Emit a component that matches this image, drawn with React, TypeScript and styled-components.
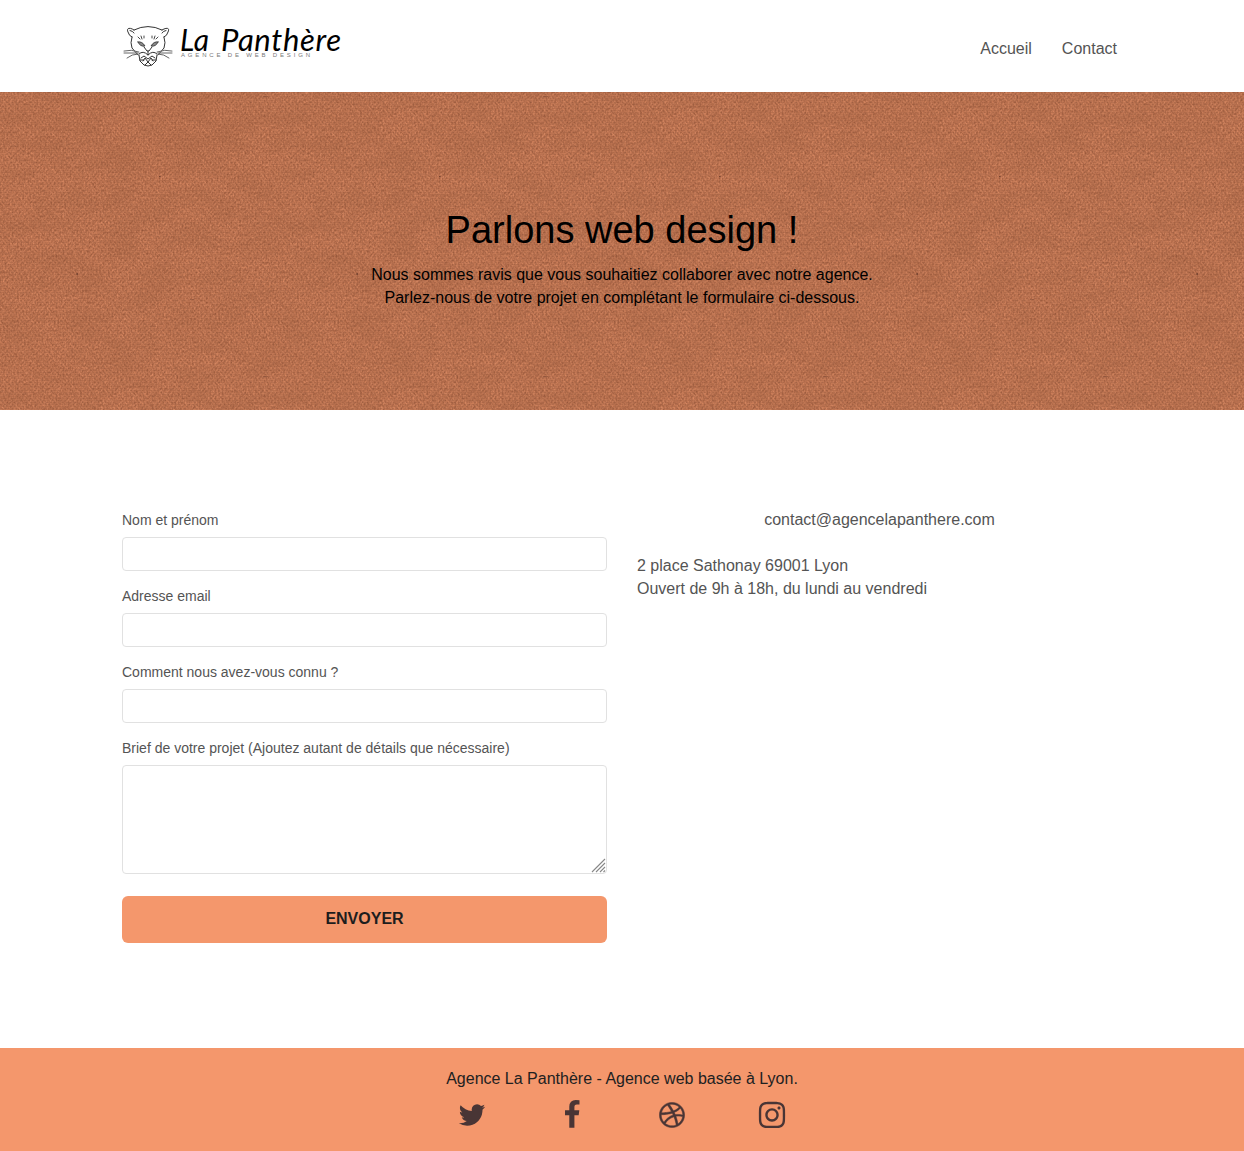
import React from "react";
import styled, { createGlobalStyle } from "styled-components";
import { FaDribbble, FaInstagram } from "react-icons/fa";

const svgUrl = (svg: string) =>
  `url("data:image/svg+xml,${encodeURIComponent(svg).replace(/'/g, "%27").replace(/\(/g, "%28").replace(/\)/g, "%29")}")`;

const grain = svgUrl(`<svg xmlns='http://www.w3.org/2000/svg' width='280' height='280'><filter id='f' x='0' y='0' width='100%' height='100%' color-interpolation-filters='sRGB'><feTurbulence type='fractalNoise' baseFrequency='0.57 0.43' numOctaves='3' seed='4' stitchTiles='stitch'/><feColorMatrix values='0.3 0.08 0 0 0.545  0.22 0.08 0 0 0.3  0.17 0.08 0 0 0.192  0 0 0 0 1'/></filter><filter id='g' x='0' y='0' width='100%' height='100%' color-interpolation-filters='sRGB'><feTurbulence type='fractalNoise' baseFrequency='0.03 0.05' numOctaves='4' seed='9' stitchTiles='stitch'/><feColorMatrix values='0 0 0 0 0.6  0 0 0 0 0.36  0 0 0 0 0.24  0.5 0 0 0 -0.17'/></filter><pattern id='w' width='4' height='4' patternUnits='userSpaceOnUse'><path d='M0 0h2v1h-2zM2 2h2v1h-2z' fill='#7d452e' opacity='.16'/></pattern><rect width='280' height='280' filter='url(#f)'/><rect width='280' height='280' filter='url(#g)'/><rect width='280' height='280' fill='url(#w)'/><g fill='#6b3c2a'><rect x='76.5' y='181' width='1.3' height='2'/><rect x='159' y='84' width='1.5' height='1' opacity='.8'/><rect x='263' y='4' width='5' height='1' opacity='.4'/><rect x='190' y='207' width='4' height='1' opacity='.4'/></g></svg>`);

const grip = svgUrl(`<svg xmlns='http://www.w3.org/2000/svg' width='15' height='15'><path d='M1 14L14 1M5 14L14 5M9 14L14 9M12.5 14L14 12.5' stroke='#888' stroke-width='1.1'/></svg>`);

const Global = createGlobalStyle`
  * { box-sizing: border-box; }
  body { margin: 0; background: #fff; color: #545454; font: 16px/23px "Liberation Sans", Arial, sans-serif; }
`;
const Header = styled.header`
  height: 92px; padding: 0 127px 0 122px; display: flex; justify-content: space-between; align-items: center;
`;
const LogoDrawing = styled.svg`display: block; overflow: visible;`;
const Nav = styled.nav`display: flex; gap: 30px; padding-top: 4px;`;
const NavLink = styled.a`color: #545454; text-decoration: none;`;
const Hero = styled.section`
  height: 318px; padding-top: 117px; text-align: center; color: #000;
  background: #bb7350 ${grain} 0 0 / 280px 280px;
`;
const Title = styled.h1`margin: 0 0 11px; font-size: 38px; line-height: 43px; font-weight: 400;`;
const Text = styled.p`margin: 0;`;
const Main = styled.main`
  height: 638px; padding: 98px 122px 0; display: grid; grid-template-columns: 485px 485px; gap: 30px; align-items: start;
`;
const Form = styled.form`display: flex; flex-direction: column;`;
const Field = styled.label`
  display: flex; flex-direction: column; gap: 7px; margin-bottom: 13px; padding-top: 2px; font-size: 14px; line-height: 20px;
`;
const Input = styled.input`height: 34px; border: 1px solid #e1e1e1; border-radius: 4px; background: #fff;`;
const Area = styled.textarea`
  height: 109px; border: 1px solid #e1e1e1; border-radius: 4px; background: #fff; resize: vertical;
  &::-webkit-resizer { background: ${grip} right bottom no-repeat; }
`;
const Submit = styled.button`
  height: 47px; margin-top: 9px; padding: 0 0 2px; border: 0; border-radius: 6px; background: #f4976c; color: #1d1d1d;
  font: bold 16px "Liberation Sans", Arial, sans-serif;
`;
const Info = styled.address`font-style: normal;`;
const Mail = styled.p`margin: 0 0 23px; text-align: center;`;
const Footer = styled.footer`
  height: 103px; padding-top: 19px; background: #f4976c; color: #212121; display: flex; flex-direction: column; align-items: center;
`;
const Social = styled.div`display: grid; grid-template-columns: repeat(4, 100px); margin-top: 10px; color: #493535;`;
const SocialLink = styled.a`display: flex; height: 30px; align-items: center; justify-content: center;`;

const Glyph = ({ d }: { d: string }) => (
  <svg width="30" height="30" viewBox="0 0 1792 1792" fill="currentColor"><path d={d} /></svg>
);
const twitter = "M1684 408q-67 98-162 167 1 14 1 42 0 130-38 259.5t-115.5 248.5-184.5 210.5-258 146-323 54.5q-271 0-496-145 35 4 78 4 225 0 401-138-105-2-188-64.5t-114-159.5q33 5 61 5 43 0 85-11-112-23-185.5-111.5t-73.5-205.5v-4q68 38 146 41-66-44-105-115t-39-154q0-88 44-163 121 149 294.5 238.5t371.5 99.5q-8-38-8-74 0-134 94.5-228.5t228.5-94.5q140 0 236 102 109-21 205-78-37 115-142 178 93-10 186-50z";
const facebook = "M1343 12v264h-157q-86 0-116 36t-30 108v189h293l-39 296h-254v759h-306v-759h-255v-296h255v-218q0-186 104-288.5t277-102.5q147 0 228 12z";

const Logo = () => (
  <LogoDrawing width="220" height="44" viewBox="122 24 220 44" role="img">
    <g fill="none" stroke="#333" strokeWidth="1" strokeLinecap="round" strokeLinejoin="round">
      <path d="M134 30Q148 23 162 30M134 30C130 27 126 28 128 32Q129 36 132 37M162 30C167 27 170 28 168 32Q167 36 164 37M132 37Q130 43 132 48L138 55M164 37Q166 43 164 48L158 55" />
      <path d="M130 30.5Q133 31 134 33M166 30.5Q163 31 162 33M144 47L147 51H149L152 47M148 51V55M139 54Q143 50 148 55Q153 50 157 54M139 55L140 61L144 65Q148 67 152 65L156 61L157 55M141 58L144 56L148 59L152 56L155 58M143 61L145 58L148 62L151 58L153 61M145 65L148 62L151 65M140 60H144M152 60H156" />
      <path fill="#888" strokeWidth=".8" d="M138 42Q142 41 145 46Q140 47 138 42ZM158 42Q154 41 151 46Q156 47 158 42Z" />
      <path stroke="#666" d="M139 52Q131 49 124 51M138 53L124 53M138 54Q132 54 127 58M157 52Q165 49 172 51M158 53L172 53M158 54Q164 54 169 58" />
      <path strokeWidth=".9" d="M138 37L140 39M141 36L142 39M144 36V38M152 36V38M155 36L154 39M158 37L156 39" />
    </g>
    <g fill="#000" fontFamily="Lato, sans-serif" fontStyle="italic" fontSize="31">
      <text x="180" y="51" textLength="29" lengthAdjust="spacingAndGlyphs">La</text>
      <text x="221" y="51" textLength="120" lengthAdjust="spacing">Panthère</text>
    </g>
    <text x="181" y="57" fill="#777" fontFamily="Liberation Sans, sans-serif" fontSize="6" textLength="129">AGENCE DE WEB DESIGN</text>
  </LogoDrawing>
);

export default function App() {
  return (
    <>
      <Global />
      <Header><Logo /><Nav><NavLink>Accueil</NavLink><NavLink>Contact</NavLink></Nav></Header>
      <Hero>
        <Title>Parlons web design !</Title>
        <Text>Nous sommes ravis que vous souhaitiez collaborer avec notre agence.<br />Parlez-nous de votre projet en complétant le formulaire ci-dessous.</Text>
      </Hero>
      <Main>
        <Form>
          <Field>Nom et prénom<Input /></Field>
          <Field>Adresse email<Input /></Field>
          <Field>Comment nous avez-vous connu ?<Input /></Field>
          <Field>Brief de votre projet (Ajoutez autant de détails que nécessaire)<Area /></Field>
          <Submit type="button">ENVOYER</Submit>
        </Form>
        <Info>
          <Mail>contact@agencelapanthere.com</Mail>
          <Text>2 place Sathonay 69001 Lyon<br />Ouvert de 9h à 18h, du lundi au vendredi</Text>
        </Info>
      </Main>
      <Footer>
        <Text>Agence La Panthère - Agence web basée à Lyon.</Text>
        <Social>
          <SocialLink><Glyph d={twitter} /></SocialLink>
          <SocialLink><Glyph d={facebook} /></SocialLink>
          <SocialLink><FaDribbble size={26} stroke="currentColor" strokeWidth={10} /></SocialLink>
          <SocialLink><FaInstagram size={30} /></SocialLink>
        </Social>
      </Footer>
    </>
  );
}
